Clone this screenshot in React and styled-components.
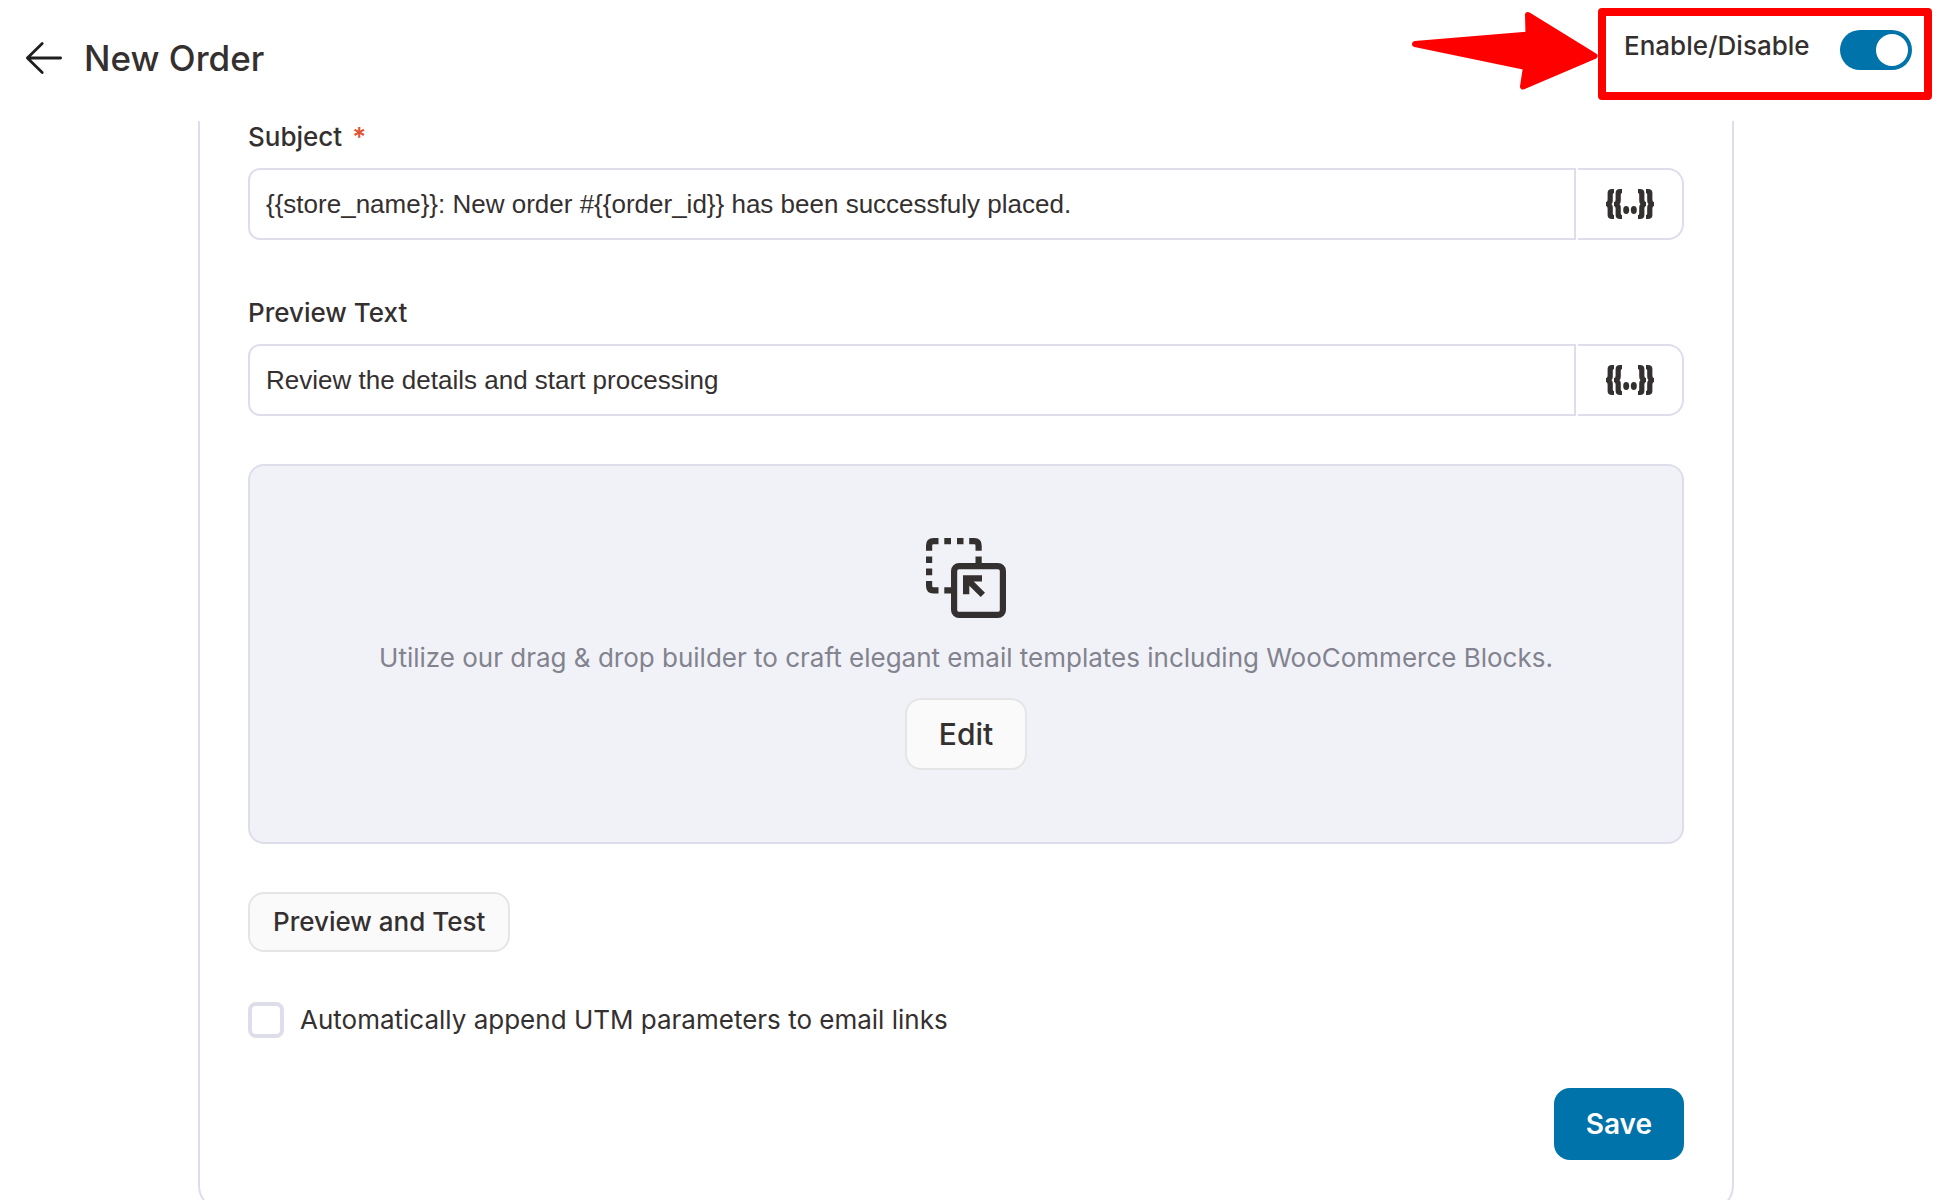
import React, { useState } from 'react';
import styled, { createGlobalStyle } from 'styled-components';

const GlobalStyle = createGlobalStyle`
  * {
    box-sizing: border-box;
  }

  body {
    margin: 0;
    background: #fff;
    color: #353030;
    font-family: Inter, "Liberation Sans", sans-serif;
    font-size: 26px;
    line-height: 32px;
  }

  button,
  input {
    color: inherit;
    font: inherit;
  }
`;

const Page = styled.div`
  display: flex;
  flex-direction: column;
  height: 100vh;
`;

const Header = styled.header`
  display: flex;
  flex: none;
  justify-content: space-between;
  height: 121px;
  padding: 8px 12px 0 24px;
`;

const HeaderTitle = styled.div`
  display: flex;
  align-items: center;
  gap: 20px;
  height: 100px;
`;

const BackButton = styled.button`
  display: flex;
  padding: 0;
  border: 0;
  background: none;
  cursor: pointer;
`;

const Title = styled.h1`
  margin: 0;
  font-size: 35px;
  font-weight: 500;
  line-height: 44px;
`;

const Callout = styled.div`
  display: flex;
`;

const Highlight = styled.div`
  display: flex;
  align-items: flex-start;
  justify-content: space-between;
  width: 334px;
  height: 92px;
  padding: 14px 12px 0 18px;
  border: 8px solid #f00;
  border-radius: 4px;
`;

const ToggleLabel = styled.label`
  font-weight: 500;
`;

const Toggle = styled.input`
  display: flex;
  align-items: center;
  justify-content: ${(props) => (props.checked ? 'flex-end' : 'flex-start')};
  width: 72px;
  height: 40px;
  margin: 0;
  padding: 4px;
  border-radius: 20px;
  background: ${(props) => (props.checked ? '#0073aa' : '#dedfea')};
  appearance: none;
  cursor: pointer;

  &::before {
    width: 32px;
    height: 32px;
    border-radius: 50%;
    background: #fff;
    content: '';
  }
`;

const Main = styled.main`
  flex: 1;
  min-height: 0;
  padding: 0 12px 0 0;
  overflow-y: auto;
  scrollbar-width: none;
`;

const Card = styled.form`
  display: flex;
  flex-direction: column;
  gap: 48px;
  max-width: 1536px;
  margin: 0 auto;
  padding: 0 48px 48px;
  border: 2px solid #dedeeb;
  border-top: 0;
  border-radius: 0 0 24px 24px;
`;

const Fields = styled.div`
  display: flex;
  flex-direction: column;
  gap: 57px;
`;

const Field = styled.div`
  display: flex;
  flex-direction: column;
  gap: 15px;
`;

const FieldLabel = styled.label`
  font-weight: 500;
`;

const Required = styled.span`
  margin-left: 10px;
  color: #e15334;
  font-weight: 600;
`;

const InputGroup = styled.div`
  display: flex;
  gap: 2px;
  height: 72px;
`;

const TextInput = styled.input`
  flex: 1;
  min-width: 0;
  padding: 0 16px;
  border: 2px solid #dedeeb;
  border-radius: 12px 0 0 12px;
  background: #fff;
  font-family: "Liberation Sans", Arial, sans-serif;
`;

const MergeTagButton = styled.button`
  display: flex;
  align-items: center;
  justify-content: center;
  width: 106px;
  padding: 0;
  border: 2px solid #dedeeb;
  border-left: 0;
  border-radius: 0 16px 16px 0;
  background: #fff;
  cursor: pointer;
`;

const Builder = styled.section`
  display: flex;
  flex-direction: column;
  align-items: center;
  gap: 20px;
  padding: 72px 48px;
  border: 2px solid #dedeeb;
  border-radius: 16px;
  background: #f1f2f8;
`;

const BuilderText = styled.p`
  margin: 0;
  color: #82838e;
  line-height: 40px;
`;

const Button = styled.button`
  height: ${(props) => (props.$small ? '60px' : '72px')};
  padding: ${(props) => (props.$small ? '0 23px' : '0 32px')};
  border: 2px solid #e5e5e5;
  border-radius: 16px;
  background: #fafafa;
  font-size: ${(props) => (props.$small ? '26px' : '30px')};
  font-weight: 500;
  cursor: pointer;
`;

const SaveButton = styled(Button)`
  padding: 0 30px;
  border-color: #0073aa;
  background: #0073aa;
  color: #fff;
  font-size: 28px;
  font-weight: 600;
`;

const Row = styled.div`
  display: flex;
  justify-content: ${(props) => (props.$end ? 'flex-end' : 'flex-start')};
`;

const CheckRow = styled.label`
  display: flex;
  align-items: center;
  gap: 16px;
  height: 40px;
`;

const Checkbox = styled.input`
  width: 36px;
  height: 36px;
  margin: 0;
  border: 4px solid #dedeeb;
  border-radius: 8px;
  background: #fff;
  appearance: none;

  &:checked {
    border-color: #0073aa;
    background: #0073aa;
  }
`;

function BackIcon() {
  return (
    <svg width="40" height="36" viewBox="0 0 40 36" fill="none" stroke="#1f1f1f" strokeWidth="2.8" strokeLinecap="round" strokeLinejoin="round">
      <path d="M36.6 18H3.400M18.200 3.400L3.400 18L18.200 32.600" />
    </svg>
  );
}

function PointerArrow() {
  return (
    <svg width="188" height="92" viewBox="1410 8 188 92" fill="#f00" stroke="#f00" strokeWidth="6" strokeLinejoin="round">
      <path d="M1415 44L1528.500 34.500L1528 15L1594.500 56L1523 86.500L1526 67Z" />
    </svg>
  );
}

const brace = 'M8 0H6Q1.600 0 1.600 4V10.500Q1.600 13 0 13V17Q1.600 17 1.600 19.500V26Q1.600 30 6 30H8V26Q6.800 26 6.800 24.500V18.500Q6.800 16 5.500 15Q6.800 14 6.800 11.500V5.500Q6.800 4 8 4Z';

function MergeTagIcon() {
  return (
    <svg width="48" height="30" viewBox="0 0 48 30" fill="#353030">
      <path d={brace} />
      <path d={brace} transform="translate(8 0)" />
      <ellipse cx="20.200" cy="21" rx="3" ry="4" />
      <ellipse cx="27.800" cy="21" rx="3" ry="4" />
      <path d={brace} transform="translate(40 0) scale(-1 1)" />
      <path d={brace} transform="translate(48 0) scale(-1 1)" />
    </svg>
  );
}

function DragDropIcon() {
  return (
    <svg width="80" height="80" viewBox="0 0 80 80" fill="none">
      <g stroke="#353030" strokeWidth="6.200">
        <path d="M3.100 12.800V7.500Q3.100 3.100 7.500 3.100H12.500" />
        <path d="M18.300 3.100H25M31 3.100H37.500" />
        <path d="M43.200 3.100H48.200Q52.600 3.100 52.600 7.500V12.800" />
        <path d="M3.100 18.500V25M3.100 30.600V37.200" />
        <path d="M3.100 43V48Q3.100 52.400 7.500 52.400H12.500" />
        <path d="M18.300 52.400H26M52.600 18.500V26" />
        <rect x="28.100" y="28.100" width="48.800" height="48.800" rx="5" />
      </g>
      <path d="M37 37.300H56V43.500H47.700L59 54.800L54.700 59L43.300 47.800V56.300H37Z" fill="#353030" />
    </svg>
  );
}

function MergeField({ id, label, required, initialValue }) {
  const [value, setValue] = useState(initialValue);

  return (
    <Field>
      <FieldLabel htmlFor={id}>
        {label}
        {required && <Required>*</Required>}
      </FieldLabel>
      <InputGroup>
        <TextInput id={id} type="text" value={value} onChange={(evt) => setValue(evt.target.value)} />
        <MergeTagButton type="button" aria-label="Insert merge tag">
          <MergeTagIcon />
        </MergeTagButton>
      </InputGroup>
    </Field>
  );
}

function App() {
  const [enabled, setEnabled] = useState(true);
  const [appendUtm, setAppendUtm] = useState(false);

  return (
    <Page>
      <GlobalStyle />

      <Header>
        <HeaderTitle>
          <BackButton type="button" aria-label="Back">
            <BackIcon />
          </BackButton>
          <Title>New Order</Title>
        </HeaderTitle>
        <Callout>
          <PointerArrow />
          <Highlight>
            <ToggleLabel htmlFor="enabled">Enable/Disable</ToggleLabel>
            <Toggle
              id="enabled"
              type="checkbox"
              role="switch"
              checked={enabled}
              onChange={() => setEnabled(!enabled)}
            />
          </Highlight>
        </Callout>
      </Header>

      <Main>
        <Card onSubmit={(evt) => evt.preventDefault()}>
          <Fields>
            <MergeField
              id="subject"
              label="Subject"
              required
              initialValue="{{store_name}}: New order #{{order_id}} has been successfuly placed."
            />
            <MergeField
              id="preview-text"
              label="Preview Text"
              initialValue="Review the details and start processing"
            />
          </Fields>

          <Builder>
            <DragDropIcon />
            <BuilderText>
              Utilize our drag &amp; drop builder to craft elegant email templates including WooCommerce Blocks.
            </BuilderText>
            <Button type="button">Edit</Button>
          </Builder>

          <Row>
            <Button type="button" $small>Preview and Test</Button>
          </Row>

          <CheckRow>
            <Checkbox type="checkbox" checked={appendUtm} onChange={() => setAppendUtm(!appendUtm)} />
            Automatically append UTM parameters to email links
          </CheckRow>

          <Row $end>
            <SaveButton type="submit">Save</SaveButton>
          </Row>
        </Card>
      </Main>
    </Page>
  );
}

export default App;
